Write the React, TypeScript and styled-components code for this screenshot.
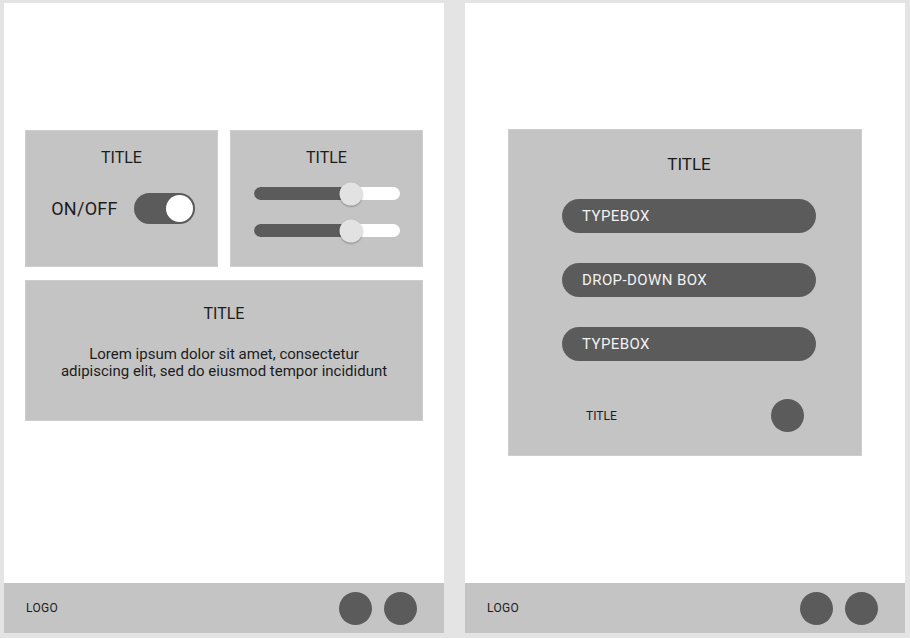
// Dependencies
import React from 'react'
import styled, { createGlobalStyle } from 'styled-components'

// Palette
const grey = '#c4c4c4'
const dark = '#5b5b5b'
const ink = '#1c1c1c'

// Page
export default function App() {
  return (
    <>
      <GlobalStyle />
      <Screens>
        <Screen>
          <Content>
            <CardGrid>
              <Card>
                <CardTitle>TITLE</CardTitle>
                <ToggleRow>
                  <ToggleLabel>ON/OFF</ToggleLabel>
                  <Switch>
                    <Knob />
                  </Switch>
                </ToggleRow>
              </Card>
              <Card>
                <CardTitle>TITLE</CardTitle>
                <Sliders>
                  <Slider value={67} />
                  <Slider value={67} />
                </Sliders>
              </Card>
              <WideCard>
                <CardTitle $top={24}>TITLE</CardTitle>
                <Body>
                  Lorem ipsum dolor sit amet, consectetur
                  <br />
                  adipiscing elit, sed do eiusmod tempor incididunt
                </Body>
              </WideCard>
            </CardGrid>
          </Content>
          <Footer />
        </Screen>

        <Screen>
          <Content>
            <FormCard>
              <FormTitle>TITLE</FormTitle>
              <Fields>
                <Field>TYPEBOX</Field>
                <Field>DROP-DOWN BOX</Field>
                <Field>TYPEBOX</Field>
              </Fields>
              <FormBottom>
                <SmallTitle>TITLE</SmallTitle>
                <Dot />
              </FormBottom>
            </FormCard>
          </Content>
          <Footer />
        </Screen>
      </Screens>
    </>
  )
}

const Slider = ({ value }: { value: number }) => (
  <Track>
    <Fill style={{ width: `${value}%` }} />
    <Thumb style={{ left: `${value}%` }} />
  </Track>
)

const Footer = () => (
  <Bar>
    <Logo>LOGO</Logo>
    <Dots>
      <Dot />
      <Dot />
    </Dots>
  </Bar>
)

// Styled Components
const GlobalStyle = createGlobalStyle`
  html, body {
    margin: 0;
    background: #e4e4e4;
    font-family: Roboto, "Liberation Sans", sans-serif;
    color: ${ink};
  }
`

const Screens = styled.div`
  display: flex;
  gap: 21px;
  padding: 3px 5px 5px 4px;
`

const Screen = styled.section`
  display: flex;
  flex-direction: column;
  width: 440px;
  height: 630px;
  background: #ffffff;
`

const Content = styled.main`
  flex: 1;
`

const CardGrid = styled.div`
  display: grid;
  grid-template-columns: 1fr 1fr;
  grid-template-rows: 137px 141px;
  column-gap: 12px;
  row-gap: 13px;
  margin: 127px 21px 0;
`

const Card = styled.div`
  display: flex;
  flex-direction: column;
  align-items: center;
  background: ${grey};
  box-shadow: inset 0 0 0 1px #cdcdcd;
`

const WideCard = styled(Card)`
  grid-column: 1 / span 2;
`

const CardTitle = styled.h2<{ $top?: number }>`
  margin: ${p => p.$top ?? 18}px 0 0;
  font-size: 16px;
  font-weight: 400;
  line-height: 19px;
`

const ToggleRow = styled.div`
  display: flex;
  align-items: center;
  gap: 16px;
  margin-top: 26px;
  margin-left: 3px;
`

const ToggleLabel = styled.span`
  font-size: 18px;
  letter-spacing: 0.3px;
`

const Switch = styled.div`
  display: flex;
  justify-content: flex-end;
  align-items: center;
  width: 61px;
  height: 31px;
  padding: 0 2px;
  box-sizing: border-box;
  border-radius: 16px;
  background: ${dark};
`

const Knob = styled.div`
  width: 27px;
  height: 27px;
  border-radius: 50%;
  background: #ffffff;
`

const Sliders = styled.div`
  display: flex;
  flex-direction: column;
  gap: 24px;
  margin-top: 20px;
`

const Track = styled.div`
  position: relative;
  width: 146px;
  height: 13px;
  border-radius: 7px;
  background: #ffffff;
`

const Fill = styled.div`
  height: 100%;
  border-radius: 7px 0 0 7px;
  background: ${dark};
`

const Thumb = styled.div`
  position: absolute;
  top: 50%;
  width: 23px;
  height: 23px;
  border-radius: 50%;
  background: #e2e2e2;
  box-shadow: 0 1px 2px rgba(0, 0, 0, 0.3);
  transform: translate(-50%, -50%);
`

const Body = styled.p`
  margin: 23px 0 0;
  font-size: 15px;
  line-height: 17px;
  text-align: center;
`

const FormCard = styled.div`
  display: flex;
  flex-direction: column;
  align-items: center;
  width: 354px;
  height: 327px;
  padding-left: 8px;
  box-sizing: border-box;
  margin: 126px auto 0;
  background: ${grey};
  box-shadow: inset 0 0 0 1px #cdcdcd;
`

const FormTitle = styled.h2`
  margin: 25px 0 0;
  font-size: 17px;
  font-weight: 400;
  line-height: 21px;
`

const Fields = styled.div`
  display: flex;
  flex-direction: column;
  gap: 30px;
  margin-top: 24px;
`

const Field = styled.div`
  display: flex;
  align-items: center;
  width: 254px;
  height: 34px;
  padding-left: 20px;
  box-sizing: border-box;
  border-radius: 17px;
  background: ${dark};
  color: #f2f2f2;
  font-size: 15px;
  letter-spacing: 0.4px;
`

const FormBottom = styled.div`
  display: flex;
  align-items: center;
  justify-content: space-between;
  width: 254px;
  padding: 0 12px 0 24px;
  box-sizing: border-box;
  margin-top: 38px;
`

const SmallTitle = styled.span`
  font-size: 12px;
`

const Bar = styled.footer`
  display: flex;
  align-items: center;
  justify-content: space-between;
  height: 50px;
  padding: 0 27px 0 22px;
  background: ${grey};
`

const Logo = styled.span`
  font-size: 12px;
  letter-spacing: 0.3px;
`

const Dots = styled.div`
  display: flex;
  gap: 12px;
`

const Dot = styled.div`
  width: 33px;
  height: 33px;
  border-radius: 50%;
  background: ${dark};
`
